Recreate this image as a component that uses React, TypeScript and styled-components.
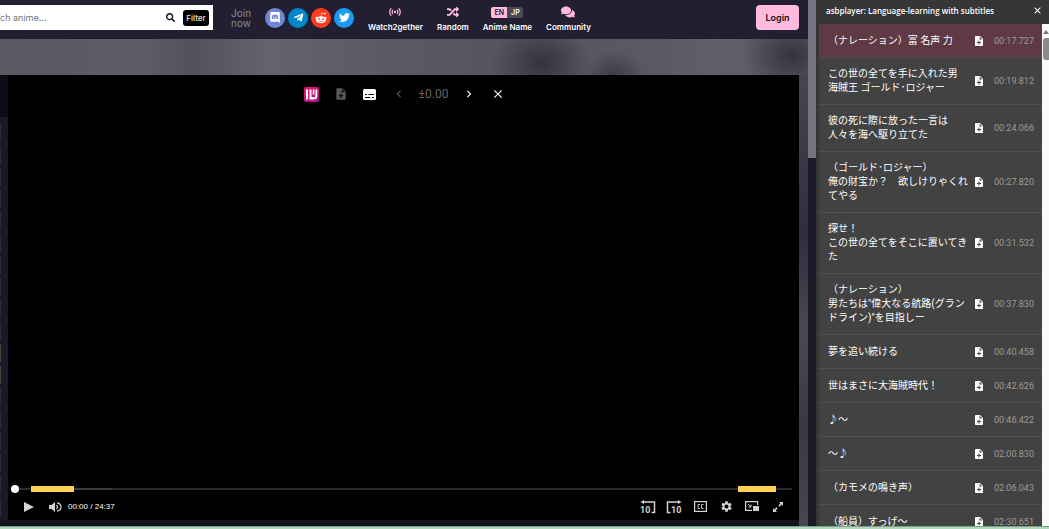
import React from 'react';
import styled, { createGlobalStyle, css } from 'styled-components';
import { FaSearch, FaTelegramPlane, FaRedditAlien, FaTwitter, FaRandom, FaComments } from 'react-icons/fa';
import { MdSensors, MdNoteAdd, MdChevronLeft, MdChevronRight, MdClose, MdSettings } from 'react-icons/md';

const Global = createGlobalStyle`
  * { box-sizing: border-box; }
  html, body, #root { height: 100%; margin: 0; }
  body { background: #1a1926; font-family: Inter, "Open Sans", sans-serif; overflow: hidden; }
  button { border: 0; padding: 0; background: none; color: inherit; font-family: inherit; cursor: pointer; }
  svg { display: block; }
`;

const Screen = styled.div`
  display: flex;
  flex-direction: column;
  height: 100vh;
`;
const Columns = styled.div`
  flex: 1;
  min-height: 0;
  display: flex;
`;
const TaskEdge = styled.div`
  height: 3px;
  background: #aedab9;
  border-top: 1px solid #7f9c8a;
`;

const Site = styled.div`
  flex: 1;
  min-width: 0;
  display: flex;
  flex-direction: column;
`;
const Header = styled.header`
  height: 39px;
  flex: none;
  display: flex;
  align-items: center;
  padding-right: 9px;
  background: #211f31;
  color: #fff;
`;
const Search = styled.form`
  width: 213px;
  height: 25px;
  margin-bottom: 4px;
  display: flex;
  align-items: center;
  gap: 8px;
  padding-right: 4px;
  background: #fff;
  color: #111;
`;
const SearchInput = styled.input`
  flex: 1;
  min-width: 0;
  border: 0;
  padding: 0;
  outline: 0;
  background: none;
  font: 400 9px Inter, sans-serif;
  &::placeholder { color: #6c757d; opacity: 1; }
`;
const FilterButton = styled.button`
  width: 26px;
  height: 16px;
  border-radius: 3px;
  background: #000;
  color: #f4ecd8;
  font-size: 8px;
  font-weight: 500;
`;
const Join = styled.span`
  width: 22px;
  margin: 0 12px 4px 18px;
  color: #8b8a94;
  font-size: 10px;
  line-height: 10px;
`;
const Socials = styled.nav`
  display: flex;
  gap: 3px;
  margin-bottom: 4px;
`;
const Social = styled.a<{ $bg: string }>`
  width: 20px;
  height: 20px;
  border-radius: 50%;
  display: grid;
  place-items: center;
  color: #fff;
  background: ${(p) => p.$bg};
`;
const Menu = styled.nav`
  display: flex;
  gap: 14px;
  margin-left: 14px;
`;
const MenuItem = styled.a`
  display: flex;
  flex-direction: column;
  align-items: center;
  gap: 3px;
  margin-bottom: 2px;
  color: #fff;
  text-decoration: none;
  font-size: 8px;
  line-height: 10px;
  font-weight: 600;
  white-space: nowrap;
`;
const MenuIcon = styled.span`
  height: 14px;
  display: flex;
  align-items: center;
  color: #ffbade;
`;
const Lang = styled.span<{ $on?: boolean }>`
  width: 16px;
  height: 11px;
  text-align: center;
  font-size: 7px;
  line-height: 11px;
  background: ${(p) => (p.$on ? '#ffbade' : '#4a4b51')};
  color: ${(p) => (p.$on ? '#211f31' : '#fff')};
  border-radius: ${(p) => (p.$on ? '2px 0 0 2px' : '0 2px 2px 0')};
`;
const Login = styled.button`
  width: 43px;
  height: 25px;
  margin: 0 0 4px auto;
  border-radius: 4px;
  background: #ffbade;
  color: #111;
  font-size: 9px;
  font-weight: 600;
`;

const Body = styled.main`
  flex: 1;
  min-height: 0;
  display: flex;
  padding: 36px 9px 6px 0;
  background:
    linear-gradient(#14131f, #14131f) left bottom / calc(100% - 9px) 7px no-repeat,
    radial-gradient(50px 40px at 67% 24px, rgba(50, 46, 60, .9), transparent) left top / 100% 36px no-repeat,
    radial-gradient(30px 24px at 76% 36px, rgba(50, 46, 60, .7), transparent) left top / 100% 36px no-repeat,
    radial-gradient(50px 40px at 98% 16px, rgba(50, 46, 60, .9), transparent) left top / 100% 36px no-repeat,
    linear-gradient(90deg, #5a5862 0%, #5d5b66 18%, #53515b 24%, #64626c 33%, #5a5862 50%, #565460 61%, #595762 74%, #5b5863 82%, #625f69 88%, #5c5964 100%) left top / 100% 36px no-repeat,
    linear-gradient(#4c4a57, #302d3c 40%, #4b4855 60%, #3a3745 80%, #494654);
`;
const Gutter = styled.aside`
  width: 8px;
  flex: none;
  padding-top: 49px;
  background: linear-gradient(#0e0d17 42px, #1b1926 42px);
`;
const EpisodeEdge = styled.div<{ $seen?: boolean }>`
  width: 1px;
  height: 18px;
  margin-bottom: 4px;
  background: ${(p) => (p.$seen ? '#4b4337' : '#2a2c36')};
`;
const Player = styled.section`
  flex: 1;
  min-width: 0;
  display: flex;
  flex-direction: column;
  justify-content: space-between;
  background: #000;
  color: #fff;
`;
const Overlay = styled.div`
  display: flex;
  align-items: center;
  justify-content: center;
  height: 20px;
  margin-top: 9px;
  padding-left: 2px;
  color: #fff;
`;
const OverlayButton = styled.button<{ $dim?: boolean }>`
  width: 29px;
  height: 20px;
  display: grid;
  place-items: center;
  ${(p) => p.$dim && css`color: #5a5a5a;`}
`;
const Offset = styled.span`
  width: 41px;
  text-align: center;
  color: #666;
  font: 400 12px Roboto, sans-serif;
`;
const Timeline = styled.div`
  display: flex;
  align-items: center;
  height: 8px;
  margin: 0 7px 0 3px;
`;
const Knob = styled.span`
  width: 8px;
  height: 8px;
  border-radius: 50%;
  background: #fff;
`;
const Track = styled.span<{ $grow: number; $tone?: string }>`
  flex: ${(p) => p.$grow} 1 0;
  height: 2px;
  background: ${(p) => p.$tone || '#2b2b2b'};
`;
const Chapter = styled.span<{ $grow: number }>`
  flex: ${(p) => p.$grow} 1 0;
  height: 6px;
  background: #ffd253;
`;
const Controls = styled.div`
  display: flex;
  align-items: center;
  height: 27px;
  padding: 0 8px;
  color: #d2d2d2;
`;
const ControlButton = styled.button`
  width: 26px;
  height: 20px;
  display: grid;
  place-items: center;
`;
const Time = styled.span`
  color: #fff;
  font: 400 8px "Liberation Sans", Arial, sans-serif;
`;
const Right = styled.div`
  display: flex;
  margin-left: auto;
`;

const PageScroll = styled.div`
  width: 8px;
  flex: none;
  background: #1b1a29;
`;
const PageThumb = styled.div`
  height: 30%;
  background: #757480;
`;

const Panel = styled.aside`
  width: 233px;
  flex: none;
  display: flex;
  flex-direction: column;
  background: #363636;
  color: #fff;
`;
const PanelHead = styled.header`
  height: 24px;
  flex: none;
  display: flex;
  align-items: center;
  justify-content: space-between;
  padding: 0 6px 3px 10px;
`;
const PanelTitle = styled.h1`
  margin: 0;
  font: 600 8px "Open Sans", sans-serif;
  white-space: nowrap;
`;
const PanelBody = styled.div`
  flex: 1;
  min-height: 0;
  display: flex;
  padding-left: 3px;
`;
const Lines = styled.table`
  flex: 1;
  min-width: 0;
  display: block;
  overflow: hidden;
  background: #424242;
  tbody { display: block; }
`;
const Line = styled.tr<{ $current?: boolean }>`
  display: flex;
  align-items: center;
  min-height: 34px;
  padding: 9px 8px 9px 9px;
  border-bottom: 1px solid #4f4f4f;
  background: ${(p) => (p.$current ? '#5f3a45' : 'transparent')};
  td { padding: 0; }
`;
const Words = styled.td`
  flex: 1;
  font: 400 10px Roboto, "Noto Sans CJK JP", sans-serif;
  line-height: 14px;
  white-space: pre-line;
`;
const Mine = styled.td`
  width: 22px;
  flex: none;
  display: grid;
  place-items: center;
`;
const Stamp = styled.td`
  width: 44px;
  flex: none;
  text-align: right;
  color: #9b9b9b;
  font: 400 9px Roboto, sans-serif;
`;
const PanelScroll = styled.div`
  width: 7px;
  flex: none;
  padding: 6px 0 0 1px;
  background: #fafafa;
`;
const PanelThumb = styled.div`
  height: 22px;
  margin-top: 4px;
  border-radius: 3px 0 0 3px;
  background: #8b8b8b;
`;

const DiscordIcon = () => (
  <svg width="10" height="11" viewBox="0 0 448 512" fill="currentColor">
    <path d="M297 243c0 16-12 29-27 29s-26-13-26-29 12-28 26-28c15 0 27 12 27 28zm-122-28c-15 0-27 12-27 28s12 29 27 29c15 0 26-13 26-29s-11-28-26-28zM448 53v459c-65-57-44-38-119-108l14 47H53c-29 0-53-24-53-53V53C0 24 24 0 53 0h343c28 0 52 24 52 53zm-73 242c0-82-37-149-37-149-37-27-71-27-71-27l-4 4c43 13 63 33 63 33-61-33-132-33-190-8-10 4-15 8-15 8s22-21 67-34l-3-3s-34 0-71 27c0 0-37 67-37 149 0 0 21 37 77 39l17-21c-32-10-44-30-44-30 50 32 114 36 182 6 8-3 17-8 26-14 0 0-13 20-46 30l17 20c56-1 77-38 77-38z" />
  </svg>
);
const LogoIcon = () => (
  <svg width="15" height="15" viewBox="0 0 15 15">
    <defs>
      <linearGradient id="lg" x1="0" y1="0" x2="1" y2="1">
        <stop offset="0" stopColor="#f0146a" />
        <stop offset="1" stopColor="#a3188a" />
      </linearGradient>
    </defs>
    <rect width="15" height="15" rx="2" fill="url(#lg)" />
    <path d="M2 2.500h2v10H2zM5.500 2.500h2v7.500h2v2.500h-4zM8.800 2.500h1.600v5H8.800zM11.500 2.500h1.800V9q0 3.500-4 3.500V10.500q2.200 0 2.200-2z" fill="#fff" />
  </svg>
);
const SubtitlesIcon = () => (
  <svg width="13" height="11" viewBox="0 0 13 11">
    <rect width="13" height="11" rx="1.500" fill="#fff" />
    <path d="M2 5.500h2M5.500 5.500h5.500M2 8.500h5.500M9 8.500h2" stroke="#000" strokeWidth="1" />
  </svg>
);
const SkipIcon = ({ forward }: { forward?: boolean }) => (
  <svg width="16" height="14" viewBox="0 0 16 14" fill="none" stroke="currentColor" strokeWidth="1.500">
    {forward ? <path d="M4.500 12.500H1.500V2H13" /> : <path d="M11.500 12.500h3V2H3" />}
    <path d={forward ? 'M12 0l3.500 2L12 4z' : 'M4 0L.5 2 4 4z'} fill="currentColor" stroke="none" />
    <text x={forward ? 5 : 0} y="13" fill="currentColor" stroke="none" fontFamily="Roboto, sans-serif" fontWeight="700" fontSize="9">10</text>
  </svg>
);
const PlayIcon = () => (
  <svg width="10" height="10" viewBox="0 0 10 10" fill="currentColor"><path d="M0 0l10 5-10 5z" /></svg>
);
const VolumeIcon = () => (
  <svg width="13" height="10" viewBox="0 0 13 10" fill="none" stroke="currentColor">
    <path d="M0 3h2.500L6 0v10L2.500 7H0z" fill="currentColor" stroke="none" />
    <path d="M7.500 3q1.800 2 0 4M8 .8q4 .7 4 4.200T8 9.200" strokeWidth="1.200" />
  </svg>
);
const CaptionsIcon = () => (
  <svg width="13" height="11" viewBox="0 0 13 11" fill="none" stroke="currentColor">
    <rect x=".6" y=".6" width="11.800" height="9.800" strokeWidth="1.200" />
    <path d="M6 3.500H4v4h2M9.500 3.500h-2v4h2" strokeWidth=".9" />
  </svg>
);
const PipIcon = () => (
  <svg width="14" height="11" viewBox="0 0 14 11" fill="none" stroke="currentColor">
    <path d="M7 9.400H.6V.6h12V4" strokeWidth="1.200" />
    <path d="M3 3l3 3M6 3.500V6H3.500" />
    <rect x="8" y="5" width="6" height="5" fill="currentColor" stroke="none" />
  </svg>
);
const ExpandIcon = () => (
  <svg width="10" height="10" viewBox="0 0 10 10" fill="currentColor">
    <path d="M6 0h4v4L8.600 2.600 6.500 4.700 5.300 3.500l2.100-2.100zM4 10H0V6l1.400 1.400 2.100-2.100 1.200 1.200-2.100 2.100z" />
  </svg>
);

const lines: [string, string][] = [
  ['（ナレーション）富 名声 力', '00:17.727'],
  ['この世の全てを手に入れた男\n海賊王 ゴールド･ロジャー', '00:19.812'],
  ['彼の死に際に放った一言は\n人々を海へ駆り立てた', '00:24.066'],
  ['（ゴールド･ロジャー）\n俺の財宝か？　欲しけりゃくれてやる', '00:27.820'],
  ['探せ！\nこの世の全てをそこに置いてきた', '00:31.532'],
  ['（ナレーション）\n男たちは"偉大なる航路(グランドライン)"を目指しー', '00:37.830'],
  ['夢を追い続ける', '00:40.458'],
  ['世はまさに大海賊時代！', '00:42.626'],
  ['♪～', '00:46.422'],
  ['～♪', '02:00.830'],
  ['（カモメの鳴き声）', '02:06.043'],
  ['（船員）すっげ～', '02:30.651'],
];

export default function App() {
  return (
    <Screen>
      <Global />
      <Columns>
        <Site>
          <Header>
            <Search onSubmit={(e) => e.preventDefault()}>
              <SearchInput aria-label="Search anime" placeholder="ch anime..." />
              <button aria-label="Search"><FaSearch size={9} /></button>
              <FilterButton type="button">Filter</FilterButton>
            </Search>
            <Join>Join now</Join>
            <Socials>
              <Social href="#" aria-label="Discord" $bg="#6f85d5"><DiscordIcon /></Social>
              <Social href="#" aria-label="Telegram" $bg="#0088cc"><FaTelegramPlane size={11} /></Social>
              <Social href="#" aria-label="Reddit" $bg="#ff3c1f"><FaRedditAlien size={12} /></Social>
              <Social href="#" aria-label="Twitter" $bg="#1d9bf0"><FaTwitter size={11} /></Social>
            </Socials>
            <Menu>
              <MenuItem href="#"><MenuIcon><MdSensors size={14} /></MenuIcon>Watch2gether</MenuItem>
              <MenuItem href="#"><MenuIcon><FaRandom size={12} /></MenuIcon>Random</MenuItem>
              <MenuItem href="#"><MenuIcon><Lang $on>EN</Lang><Lang>JP</Lang></MenuIcon>Anime Name</MenuItem>
              <MenuItem href="#"><MenuIcon><FaComments size={14} /></MenuIcon>Community</MenuItem>
            </Menu>
            <Login>Login</Login>
          </Header>
          <Body>
            <Gutter>
              {Array.from({ length: 18 }, (_, i) => <EpisodeEdge key={i} $seen={i === 10 || i === 11} />)}
            </Gutter>
            <Player>
              <Overlay>
                <OverlayButton aria-label="Logo"><LogoIcon /></OverlayButton>
                <OverlayButton aria-label="Mine subtitle" $dim><MdNoteAdd size={14} /></OverlayButton>
                <OverlayButton aria-label="Subtitles"><SubtitlesIcon /></OverlayButton>
                <OverlayButton aria-label="Decrease offset" $dim><MdChevronLeft size={14} /></OverlayButton>
                <Offset>±0.00</Offset>
                <OverlayButton aria-label="Increase offset"><MdChevronRight size={14} /></OverlayButton>
                <OverlayButton aria-label="Close overlay"><MdClose size={14} /></OverlayButton>
              </Overlay>
              <div>
                <Timeline>
                  <Knob />
                  <Track $grow={12} />
                  <Chapter $grow={43} />
                  <Track $grow={38} $tone="#3c3c3c" />
                  <Track $grow={626} />
                  <Chapter $grow={38} />
                  <Track $grow={16} />
                </Timeline>
                <Controls>
                  <ControlButton aria-label="Play"><PlayIcon /></ControlButton>
                  <ControlButton aria-label="Mute"><VolumeIcon /></ControlButton>
                  <Time>00:00 / 24:37</Time>
                  <Right>
                    <ControlButton aria-label="Back 10 seconds"><SkipIcon /></ControlButton>
                    <ControlButton aria-label="Forward 10 seconds"><SkipIcon forward /></ControlButton>
                    <ControlButton aria-label="Captions"><CaptionsIcon /></ControlButton>
                    <ControlButton aria-label="Settings"><MdSettings size={13} /></ControlButton>
                    <ControlButton aria-label="Picture in picture"><PipIcon /></ControlButton>
                    <ControlButton aria-label="Fullscreen"><ExpandIcon /></ControlButton>
                  </Right>
                </Controls>
              </div>
            </Player>
          </Body>
        </Site>
        <PageScroll><PageThumb /></PageScroll>
        <Panel>
          <PanelHead>
            <PanelTitle>asbplayer: Language-learning with subtitles</PanelTitle>
            <button aria-label="Close panel"><MdClose size={11} /></button>
          </PanelHead>
          <PanelBody>
            <Lines>
              <tbody>
                {lines.map(([text, time], i) => (
                  <Line key={time} $current={i === 0}>
                    <Words>{text}</Words>
                    <Mine><MdNoteAdd size={12} /></Mine>
                    <Stamp>{time}</Stamp>
                  </Line>
                ))}
              </tbody>
            </Lines>
            <PanelScroll>
              <svg width="6" height="4" viewBox="0 0 6 4"><path d="M3 0l3 4H0z" fill="#777" /></svg>
              <PanelThumb />
            </PanelScroll>
          </PanelBody>
        </Panel>
      </Columns>
      <TaskEdge />
    </Screen>
  );
}
